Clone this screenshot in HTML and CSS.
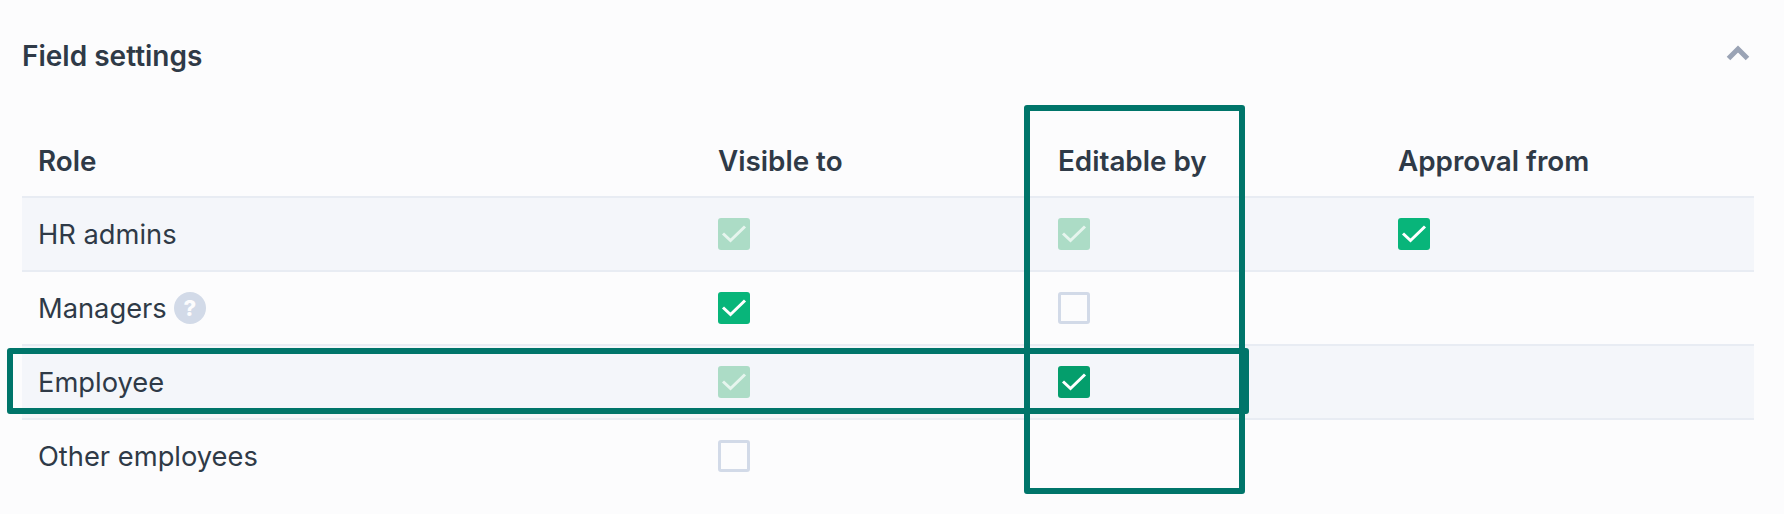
FILE: index.html
```html
<!DOCTYPE html>
<html lang="en">
<head>
<meta charset="utf-8">
<title>Field settings</title>
<link rel="stylesheet" href="styles.css">
</head>
<body>
<section class="panel">
  <header class="panel-head">
    <h2 class="panel-title">Field settings</h2>
    <svg class="chevron" width="24" height="16" viewBox="0 0 24 16"><path d="M2.5 13.5 12 4l9.5 9.5" fill="none" stroke="#9aa3b5" stroke-width="5"/></svg>
  </header>
  <table class="grid">
    <colgroup><col class="c-role"><col class="c-opt"><col class="c-opt"><col class="c-last"></colgroup>
    <thead>
      <tr><th>Role</th><th>Visible to</th><th>Editable by</th><th>Approval from</th></tr>
    </thead>
    <tbody>
      <tr>
        <td>HR admins</td>
        <td><span class="box soft"><svg viewBox="0 0 32 32"><path class="tick" d="M5 15.5 12.5 22.5 27 8.5"/></svg></span></td>
        <td><span class="box soft"><svg viewBox="0 0 32 32"><path class="tick" d="M5 15.5 12.5 22.5 27 8.5"/></svg></span></td>
        <td><span class="box on"><svg viewBox="0 0 32 32"><path class="tick" d="M5 15.5 12.5 22.5 27 8.5"/></svg></span></td>
      </tr>
      <tr>
        <td><span class="with-help">Managers <span class="help">?</span></span></td>
        <td><span class="box on"><svg viewBox="0 0 32 32"><path class="tick" d="M5 15.5 12.5 22.5 27 8.5"/></svg></span></td>
        <td><span class="box off"></span></td>
        <td></td>
      </tr>
      <tr>
        <td>Employee</td>
        <td><span class="box soft"><svg viewBox="0 0 32 32"><path class="tick" d="M5 15.5 12.5 22.5 27 8.5"/></svg></span></td>
        <td><span class="box dark"><svg viewBox="0 0 32 32"><path class="tick" d="M5 15.5 12.5 22.5 27 8.5"/></svg></span></td>
        <td></td>
      </tr>
      <tr>
        <td>Other employees</td>
        <td><span class="box off"></span></td>
        <td></td>
        <td></td>
      </tr>
    </tbody>
  </table>
</section>
<div class="mark mark-col"></div>
<div class="mark mark-row"></div>
</body>
</html>
```
FILE: styles.css
```css
html, body {
  margin: 0;
  height: 514px;
  overflow: hidden;
  background: #fcfcfd;
}
body {
  position: relative;
  font-family: Inter, "Liberation Sans", sans-serif;
  color: #2f3a47;
}
.panel {
  padding: 0 30px 0 22px;
}
.panel-head {
  height: 113px;
  padding-bottom: 2px;
  display: flex;
  align-items: center;
  justify-content: space-between;
  box-sizing: border-box;
}
.panel-title {
  margin: 0;
  font-size: 28px;
  font-weight: 600;
  line-height: 32px;
}
.chevron {
  margin: 0 4px 5px 0;
  flex: none;
}
.grid {
  width: 1732px;
  table-layout: fixed;
  border-collapse: collapse;
}
.c-role { width: 680px; }
.c-opt { width: 340px; }
.c-last { width: 372px; }
.grid th {
  height: 84px;
  padding: 12px 16px 0;
  text-align: left;
  font-size: 27.8px;
  font-weight: 600;
  border-bottom: 2px solid #e8ecf3;
  box-sizing: border-box;
}
.grid td {
  height: 74px;
  padding: 0 16px;
  font-size: 27.3px;
  font-weight: 400;
  border-bottom: 2px solid #e8ecf3;
  box-sizing: border-box;
  vertical-align: middle;
}
.grid tbody tr:nth-child(odd) { background: #f4f6fa; }
.grid tbody tr:last-child td { border-bottom-color: transparent; }
.box {
  display: block;
  width: 32px;
  height: 32px;
  border-radius: 3px;
  box-sizing: border-box;
}
.box svg { display: block; width: 32px; height: 32px; }
.tick { fill: none; stroke: #fff; stroke-width: 3; }
.on { background: #08b57a; }
.dark { background: #049e6c; }
.soft { background: #acdcc6; }
.soft .tick { stroke: #e6f5ee; }
.off { border: 3px solid #d2dae8; }
.with-help { display: inline-flex; align-items: center; gap: 7px; }
.help {
  display: inline-block;
  width: 32px;
  height: 32px;
  border-radius: 50%;
  background: #d2dae8;
  color: #fcfcfd;
  font-size: 22px;
  font-weight: 800;
  line-height: 32px;
  text-align: center;
}
.mark {
  position: absolute;
  border: 6px solid #00756a;
  border-radius: 3px;
  box-sizing: border-box;
}
.mark-col { left: 1024px; top: 105px; width: 221px; height: 389px; }
.mark-row { left: 7px; top: 348px; width: 1242px; height: 66px; }
```
